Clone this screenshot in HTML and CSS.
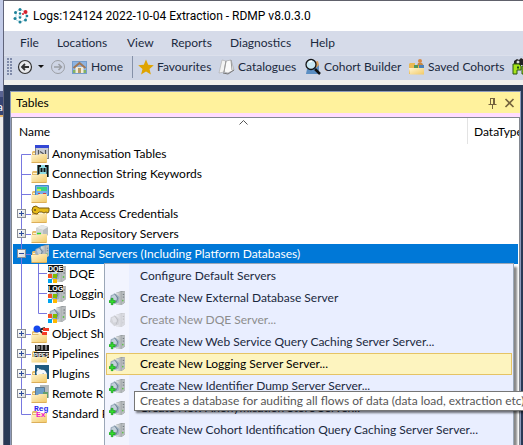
FILE: index.html
```html
<!DOCTYPE html>
<html lang="en">
<head>
<meta charset="utf-8">
<title>Logs:124124 2022-10-04 Extraction - RDMP v8.0.3.0</title>
<link rel="stylesheet" href="styles.css">
</head>
<body>
<svg class="defs" aria-hidden="true">
  <defs>
    <linearGradient id="gold" x1="0" y1="0" x2="1" y2="1"><stop offset="0" stop-color="#fff6d4"/><stop offset="1" stop-color="#f2c965"/></linearGradient>
    <linearGradient id="steel" x1="0" y1="0" x2="1" y2="0"><stop offset="0" stop-color="#e4e6e6"/><stop offset="1" stop-color="#a9aeb0"/></linearGradient>
    <linearGradient id="boxfill" x1="0" y1="0" x2="1" y2="1"><stop offset="0" stop-color="#fff"/><stop offset="1" stop-color="#d8d8d8"/></linearGradient>
  </defs>
  <symbol id="folder-back" viewBox="0 0 18 18"><path d="M1 17V7l1-1h4l1 2h9v9z" fill="#e6bd6c"/><path d="M2 8.500h13" stroke="#fff5d0"/></symbol>
  <symbol id="folder-front" viewBox="0 0 18 18"><path d="M0 10h7l1-1h8v8.500H.5z" fill="url(#gold)"/><path d="M.5 17.500h15" stroke="#dcae58"/></symbol>
  <symbol id="globe-server" viewBox="0 0 18 18"><path d="M8 3l6-2h4v13l-4 3H8z" fill="#8f9598"/><path d="M8 3l6-1v15H8z" fill="url(#steel)"/><path d="M14 2l4-1v13l-4 3z" fill="#b9bdbf"/><path d="M15.500 5h1.500M15.500 8h1.500" stroke="#687078"/><path d="M2 6l5-2 5 4-1 6-5 2-5-5z" fill="#9fb0c0"/><path d="M3 7l4-2 2 6-4 1z" fill="#c3d0da"/><path d="M6 4l4 5-2 5" fill="none" stroke="#6b7f92"/><circle cx="15.500" cy="12" r=".9" fill="#5cc244"/></symbol>
  <symbol id="add-server" viewBox="0 0 18 18"><use href="#globe-server"/><path d="M2.500 9.500h2v2.500H7v2H4.500v2.500h-2V14H0v-2h2.500z" fill="#36e22d" stroke="#129a1a" stroke-width=".8"/></symbol>
  <symbol id="windows" viewBox="0 0 18 18"><path d="M0 9h4v4H0z" fill="#f25022"/><path d="M5 9h4v4H5z" fill="#7fba00"/><path d="M0 14h4v4H0z" fill="#00a4ef"/><path d="M5 14h4v4H5z" fill="#ffb900"/></symbol>
  <symbol id="line-first" viewBox="0 0 14 20"><path d="M4.500 20V10.500H14" fill="none" stroke="#7878e0"/></symbol>
  <symbol id="line-mid" viewBox="0 0 14 20"><path d="M4.500 0v20M4.500 10.500H14" fill="none" stroke="#7878e0"/></symbol>
  <symbol id="line-last" viewBox="0 0 14 20"><path d="M4.500 0v10.500H14" fill="none" stroke="#7878e0"/></symbol>
  <symbol id="line-pass" viewBox="0 0 14 20"><path d="M4.500 0v20" fill="none" stroke="#7878e0"/></symbol>
  <symbol id="line-minus" viewBox="0 0 14 20"><use href="#line-mid"/><rect x=".5" y="5.500" width="8" height="8" fill="url(#boxfill)" stroke="#8b8f96"/><path d="M2 9.500h5" stroke="#2b4a9b"/></symbol>
  <symbol id="line-plus" viewBox="0 0 14 20"><use href="#line-minus"/><path d="M4.500 7v5" stroke="#2b4a9b"/></symbol>
  <symbol id="child-mid" viewBox="0 0 17 20"><path d="M7.500 0v20M7.500 9.500H16" fill="none" stroke="#7878e0"/></symbol>
  <symbol id="child-last" viewBox="0 0 17 20"><path d="M7.500 0v9.500H16" fill="none" stroke="#7878e0"/></symbol>
</svg>

<div class="behind" aria-hidden="true"><span class="behind-tab">a</span></div>

<div class="window">
  <header class="titlebar">
    <svg class="icon16" viewBox="0 0 16 16"><path d="M3 4l4-3 5 3M3 5v7l5 2 5-3V5M5 8h4" fill="none" stroke="#b7dce5"/><g fill="#1c8199"><circle cx="7" cy="1.500" r="1.500"/><circle cx="2.500" cy="4.500" r="1.500"/><circle cx="2" cy="10.500" r="1.500"/><circle cx="7" cy="14" r="1.500"/><circle cx="12.500" cy="12" r="1.500"/><circle cx="14" cy="8" r="1.300"/><circle cx="7" cy="5.500" r="1.200"/><circle cx="7" cy="9.500" r="1.300"/></g><circle cx="12.500" cy="4" r="2" fill="#d5202c"/><circle cx="10" cy="6" r="1" fill="#d5202c"/></svg>
    <h1>Logs:124124 2022-10-04 Extraction - RDMP v8.0.3.0</h1>
  </header>

  <nav class="menubar" aria-label="Main menu">
    <button>File</button><button>Locations</button><button>View</button><button>Reports</button><button>Diagnostics</button><button>Help</button>
  </nav>

  <div class="toolbar" role="toolbar" aria-label="Shortcuts">
    <span class="grip"></span>
    <button class="history" aria-label="Back"><svg class="icon16" viewBox="0 0 16 16"><circle cx="8" cy="8" r="6.500" fill="#e8e9ec" stroke="#333" stroke-width="1.200"/><path d="M12 8H5M8 5L5 8l3 3" fill="none" stroke="#333" stroke-width="1.800"/></svg><svg class="caret" viewBox="0 0 6 4"><path d="M0 0h6L3 3z" fill="#111"/></svg></button>
    <button class="forward" aria-label="Forward" disabled><svg class="icon16" viewBox="0 0 16 16"><circle cx="8" cy="8" r="6.500" fill="none" stroke="#9b9ea4"/><path d="M4 8h7M8.500 5l3 3-3 3" fill="none" stroke="#9b9ea4" stroke-width="1.500"/></svg></button>
    <button class="home"><svg class="icon16" viewBox="0 0 16 16"><rect x=".5" y="2.500" width="14" height="12" fill="#8db3e1" stroke="#759dcd"/><path d="M1 14h13v-3H1z" fill="#82b264"/><path d="M3.500 8h8v6h-8z" fill="#f3ebd8"/><path d="M1.500 9L7.500 4l6 5" fill="none" stroke="#a07655" stroke-width="2"/><path d="M6 9h3v5H6z" fill="#b99a64"/></svg>Home</button>
    <button class="favourites"><svg class="icon16" viewBox="0 0 16 16"><path d="M8 0.500l2.200 5.200 5.600.5-4.300 3.700 1.400 5.600L8 12.500 3.100 15.500l1.400-5.600L.2 6.200l5.600-.5z" fill="#dfa400"/></svg>Favourites</button>
    <button class="catalogues"><svg class="icon16" viewBox="0 0 16 16"><path d="M3 1l4 1-2 11-5 1z" fill="#f2f2f2" stroke="#aaa" stroke-width=".6"/><path d="M7 2l5-1 3 10-6 3-4-1z" fill="#fafafa" stroke="#999" stroke-width=".6"/><path d="M7 2L5 13M12 1l1 10" stroke="#999"/><path d="M4 14l5 1 6-4" fill="none" stroke="#777"/></svg>Catalogues</button>
    <button class="builder"><svg class="icon16" viewBox="0 0 16 16"><path d="M1 15l1-5 9-6 3 2v9z" fill="#5b8ec2"/><path d="M9 3l4-1 1 4-3 3z" fill="#d7a05f"/><circle cx="6" cy="5.500" r="5" fill="#c9e8f3" stroke="#151515" stroke-width="1.300"/><path d="M4 3l3-1" stroke="#fff" stroke-width="1.500"/><path d="M10 10l5 5" stroke="#111" stroke-width="2.500"/></svg>Cohort Builder</button>
    <button class="saved"><svg class="icon16" viewBox="0 0 16 16"><path d="M0 15V5l1-1h5v2h9v9z" fill="#e9b955"/><circle cx="11" cy="2" r="2" fill="#d98843"/><path d="M8 7l1-3h4l2 3z" fill="#c98942"/><path d="M5 9V6h4v3" fill="#51965a"/><path d="M10 9V6h5v3" fill="#4c82ba"/><path d="M0 9h15v6.500H1z" fill="url(#gold)"/></svg>Saved Cohorts</button>
    <button class="plugin" aria-label="Pipelines"><svg class="icon16" viewBox="0 0 16 16"><path d="M2 2l3-2 2 1 2-2 3 2 3-1v6H2z" fill="#222"/><circle cx="6" cy="3" r="1.500" fill="#ddd"/><path d="M1 15V5h6l2 2v4H5v4zM10 15V7h6v8z" fill="#a6e519" stroke="#2c5811"/><path d="M5 7.500h2v2H5z" fill="#164d17"/></svg></button>
  </div>

  <main class="workspace">
    <section class="panel">
      <header class="panel-head">
        <h2>Tables</h2>
        <button aria-label="Auto hide"><svg viewBox="0 0 9 12"><path d="M2.500 1v6M2 1.500h5M.500 7.500h8M4.500 8v4" fill="none" stroke="#75633d"/><path d="M6 1v6" stroke="#75633d" stroke-width="2"/></svg></button>
        <button aria-label="Close"><svg viewBox="0 0 9 12"><path d="M.5 2l8 8M8.500 2l-8 8" stroke="#75633d" stroke-width="1.600"/></svg></button>
      </header>
      <div class="list">
        <div class="columns">
          <button class="col-name">Name</button>
          <svg class="sort" viewBox="0 0 9 5"><path d="M.5 4.500l4-4 4 4" fill="none" stroke="#555"/></svg>
          <button class="col-type">DataType</button>
        </div>
        <ul class="tree" role="tree">
          <li role="treeitem"><svg class="line"><use href="#line-first"/></svg><svg class="icon18" viewBox="0 0 18 18"><use href="#folder-back"/><path d="M4 0h14v14H4z" fill="#808287"/><path d="M4 0h14v3H4z" fill="#3347d5"/><path d="M5 3h12v10H5z" fill="#c9ccd4"/><path d="M7.500 5v5M14.500 5v5M9 6.500l3 2-3 2" fill="none" stroke="#555" stroke-width="1.200"/><use href="#folder-front"/></svg>Anonymisation Tables</li>
          <li role="treeitem"><svg class="line"><use href="#line-mid"/></svg><svg class="icon18" viewBox="0 0 18 18"><use href="#folder-back"/><path d="M6 0h12v12H6z" fill="#8fdce2"/><path d="M10 1H7.500v9H10M14 1h2.500v10H14M10.500 3v4M13.500 3v4" fill="none" stroke="#111" stroke-width="2"/><use href="#folder-front"/></svg>Connection String Keywords</li>
          <li role="treeitem"><svg class="line"><use href="#line-mid"/></svg><svg class="icon18" viewBox="0 0 18 18"><use href="#folder-back"/><path d="M4.500 .5h13v10h-13z" fill="#74aee9" stroke="#4287c7"/><path d="M6 2h10v4H6z" fill="#39d383"/><path d="M6 4h4v2H6z" fill="#c7e953"/><path d="M7 8.500h2M12 8.500h3" stroke="#d74343"/><use href="#folder-front"/></svg>Dashboards</li>
          <li role="treeitem"><svg class="line"><use href="#line-plus"/></svg><svg class="icon18" viewBox="0 0 18 18"><use href="#folder-back"/><use href="#folder-front"/><path d="M2 2l3-1 3 2h10v3l-1 2-2-1-2 1-2-1H8L6 9 2 8 1 5z" fill="#e7bb18" stroke="#795b12"/><circle cx="4" cy="5" r="1" fill="#6c5318"/></svg>Data Access Credentials</li>
          <li role="treeitem"><svg class="line"><use href="#line-plus"/></svg><svg class="icon18" viewBox="0 0 18 18"><use href="#folder-back"/><path d="M5 3l6-3 6 2v8l-5 4-7-3z" fill="#b9bebf"/><path d="M5 3l6-3 6 2-5 3z" fill="#e5e8e8"/><path d="M5 3l7 2v8l-7-3z" fill="#d3d6d6"/><use href="#folder-front"/><path d="M6 8.500h4" stroke="#32d52a" stroke-width="1.500"/></svg>Data Repository Servers</li>
          <li role="treeitem" class="selected"><svg class="line"><use href="#line-minus"/></svg><svg class="icon18" viewBox="0 0 18 18"><use href="#folder-back"/><use href="#globe-server" x="3" y="-1" width="15" height="15"/><use href="#folder-front"/></svg>External Servers (Including Platform Databases)</li>
          <li role="treeitem"><svg class="line"><use href="#line-pass"/></svg><svg class="branch"><use href="#child-mid"/></svg><svg class="icon18" viewBox="0 0 18 18"><use href="#globe-server"/><path d="M0 0h15v7H0z" fill="#111"/><text x="0" y="6" class="badge-text">DQE</text><use href="#windows"/></svg>DQE</li>
          <li role="treeitem"><svg class="line"><use href="#line-pass"/></svg><svg class="branch"><use href="#child-mid"/></svg><svg class="icon18" viewBox="0 0 18 18"><use href="#globe-server"/><path d="M0 0h15v7H0z" fill="#111"/><text x="0" y="6" class="badge-text">LOG</text><use href="#windows"/></svg>Logging</li>
          <li role="treeitem"><svg class="line"><use href="#line-pass"/></svg><svg class="branch"><use href="#child-last"/></svg><svg class="icon18" viewBox="0 0 18 18"><use href="#globe-server"/><use href="#windows"/></svg>UIDs</li>
          <li role="treeitem"><svg class="line"><use href="#line-plus"/></svg><svg class="icon18" viewBox="0 0 18 18"><use href="#folder-back"/><use href="#folder-front"/><path d="M8 5l6-2M8 5l5 4" stroke="#222" stroke-width="2"/><circle cx="6" cy="4" r="3.500" fill="#1648ed"/><path d="M12 3h6v3h-6zM11 7h5v3h-5z" fill="#f43a24"/></svg>Object Sharing</li>
          <li role="treeitem"><svg class="line"><use href="#line-plus"/></svg><svg class="icon18" viewBox="0 0 18 18"><use href="#folder-back"/><path d="M4 0h14v6H4z" fill="#171717"/><path d="M6 0v5M11 0v5M15 0v5M8 1v3" stroke="#ddd"/><path d="M3 7h15v6H3z" fill="#222"/><text x="3" y="12" class="pipes-text">PIPES</text><path d="M0 12h16v5.500H.5z" fill="url(#gold)"/></svg>Pipelines</li>
          <li role="treeitem"><svg class="line"><use href="#line-plus"/></svg><svg class="icon18" viewBox="0 0 18 18"><use href="#folder-back"/><path d="M4 0h14v14H4z" fill="#205a80"/><path d="M6 10c-2-4 2-7 5-5 3-1 4 2 5 4l-1 3-3-4-2 5z" fill="#f6f8f9"/><circle cx="7" cy="4" r="1" fill="#f6f8f9"/><use href="#folder-front"/></svg>Plugins</li>
          <li role="treeitem"><svg class="line"><use href="#line-plus"/></svg><svg class="icon18" viewBox="0 0 18 18"><use href="#folder-back"/><path d="M9 0h9v13H9z" fill="#b3b9ba"/><path d="M4.500 2.500h9v8h-9z" fill="#6e9fc7" stroke="#5b7890"/><path d="M12 7h5v6h-5z" fill="#67a06c"/><use href="#folder-front"/></svg>Remote RDMP</li>
          <li role="treeitem"><svg class="line"><use href="#line-last"/></svg><svg class="icon18" viewBox="0 0 18 18"><use href="#folder-back"/><use href="#folder-front"/><text x="3" y="6" class="reg-text">Reg</text><text x="5" y="12" class="ex-text">Ex</text></svg>Standard Regex</li>
        </ul>
      </div>
    </section>
  </main>
</div>

<div class="context" role="menu">
  <button role="menuitem"><span class="slot"></span>Configure Default Servers</button>
  <button role="menuitem"><svg class="icon16 slot" viewBox="0 0 18 18"><use href="#add-server"/></svg>Create New External Database Server</button>
  <button role="menuitem" disabled><svg class="icon16 slot" viewBox="0 0 18 18"><use href="#globe-server"/></svg>Create New DQE Server...</button>
  <button role="menuitem"><svg class="icon16 slot" viewBox="0 0 18 18"><use href="#add-server"/></svg>Create New Web Service Query Caching Server Server...</button>
  <button role="menuitem" class="hot"><svg class="icon16 slot" viewBox="0 0 18 18"><use href="#add-server"/></svg>Create New Logging Server Server...</button>
  <button role="menuitem"><svg class="icon16 slot" viewBox="0 0 18 18"><use href="#add-server"/></svg>Create New Identifier Dump Server Server...</button>
  <button role="menuitem"><svg class="icon16 slot" viewBox="0 0 18 18"><use href="#add-server"/></svg>Create New Anonymisation Store Server...</button>
  <button role="menuitem"><svg class="icon16 slot" viewBox="0 0 18 18"><use href="#add-server"/></svg>Create New Cohort Identification Query Caching Server Server...</button>
  <div class="tooltip" role="tooltip">Creates a database for auditing all flows of data (data load, extraction etc)</div>
</div>
</body>
</html>
```
FILE: styles.css
```css
* { box-sizing: border-box; }

body {
  position: relative;
  display: flex;
  height: 100vh;
  margin: 0;
  overflow: hidden;
  background: #fff;
  color: #000;
  font: 12px/20px "Lato", "Liberation Sans", sans-serif;
}

h1, h2 { margin: 0; font: inherit; white-space: nowrap; }

button {
  display: flex;
  align-items: center;
  margin: 0;
  padding: 0;
  border: 0;
  background: none;
  color: inherit;
  font: inherit;
  white-space: nowrap;
}

svg { display: block; flex: none; overflow: visible; }
.defs { position: absolute; width: 0; height: 0; }
.icon16 { width: 16px; height: 16px; }
.icon18 { width: 18px; height: 18px; }

/* Edge of the window underneath */
.behind {
  flex: none;
  width: 3px;
  padding-top: 91px;
  overflow: hidden;
  background: linear-gradient(#c3cce8 0 91px, #596392 91px 97px, #364473 97px 115px, #e8b469 115px 117px, #ececec 117px);
}
.behind-tab { display: flex; justify-content: flex-end; padding-top: 6px; color: #fff; }

.window {
  display: flex;
  flex: 1;
  flex-direction: column;
  min-width: 0;
  border-top: 1px solid #60616b;
  border-left: 1px solid #60647a;
}

.titlebar {
  display: flex;
  flex: none;
  align-items: center;
  gap: 4px;
  height: 30px;
  padding-left: 9px;
  background: #fff;
  font-family: "Roboto", "Liberation Sans", sans-serif;
}

.menubar {
  display: grid;
  flex: none;
  grid-template-columns: 37px 70px 44px 59px 80px auto;
  height: 24px;
  padding-left: 16px;
  background: #d6dbe9;
  color: #1b293e;
}

.toolbar {
  display: flex;
  flex: none;
  align-items: center;
  height: 30px;
  padding: 0 0 2px 3px;
  overflow: hidden;
  border-top: 1px solid #dce0ec;
  border-bottom: 5px solid #f0f0ee;
  background: #ced5e5;
  color: #1b293e;
}
.toolbar button { flex: none; gap: 3px; height: 22px; }
.grip {
  flex: none;
  width: 6px;
  height: 18px;
  margin-right: 4px;
  background: radial-gradient(circle at 1px 1px, #808baa 1px, transparent 1px) 0 0 / 3px 3px;
}
.toolbar .history { gap: 5px; width: 33px; }
.caret { width: 6px; height: 4px; }
.forward { width: 22px; }
.home { width: 61px; border-right: 1px solid #8591a8; }
.favourites { width: 86px; padding-left: 5px; }
.catalogues { width: 86px; }
.builder { width: 104px; }
.saved { width: 103px; }

.workspace {
  display: flex;
  flex: 1;
  min-height: 0;
  padding: 6px 2px 0 6px;
  background: #293955;
}

.panel {
  display: flex;
  flex: 1;
  flex-direction: column;
  min-width: 0;
  border: 1px solid #8e9bbc;
  border-bottom: 0;
  background: #ffdcff;
}
.panel-head {
  display: flex;
  flex: none;
  align-items: center;
  gap: 8px;
  height: 21px;
  padding: 0 6px 0 5px;
  background: #fff29d;
}
.panel-head h2 { flex: 1; }
.panel-head svg { width: 9px; height: 12px; }

.list {
  flex: 1;
  margin-top: 4px;
  overflow: hidden;
  border: solid #828790;
  border-width: 1px 1px 0;
  background: #fff;
}
.columns {
  display: grid;
  grid-template-columns: 1fr auto 1fr 52px;
  height: 26px;
  padding-left: 7px;
}
.col-name { padding-top: 2px; }
.sort { grid-column: 2; width: 9px; height: 5px; margin-top: 2px; }
.col-type { grid-column: 4; padding: 2px 0 0 6px; overflow: hidden; border-left: 1px solid #e3e3e3; }

.tree { margin: 0 1px; padding: 0; list-style: none; }
.tree li {
  display: flex;
  align-items: center;
  height: 20px;
  padding-left: 4px;
  white-space: nowrap;
}
.tree .icon18 { margin-right: 3px; }
.line { width: 14px; height: 20px; }
.branch { width: 17px; height: 20px; }
.tree .selected { background: #0078d7; color: #fff; }

.badge-text { fill: #fff; font: bold 7px "Liberation Sans", sans-serif; }
.pipes-text { fill: #fff; font: bold 5px "Liberation Sans", sans-serif; }
.reg-text { fill: #2a2aee; font: bold 8px "Liberation Mono", monospace; }
.ex-text { fill: #f018d0; font: bold 8px "Liberation Mono", monospace; }

/* Context menu floating over the tree */
.context {
  position: absolute;
  top: 263px;
  left: 104px;
  right: 9px;
  padding: 1px 1px 20px;
  border: 1px solid #9ba7b7;
  background: linear-gradient(90deg, #f2f4fe 24px, #e9eeff 24px);
  box-shadow: 3px 4px 2px #0007;
  color: #1b293e;
}
.context button {
  width: 100%;
  height: 22px;
  padding-left: 2px;
  border: 1px solid transparent;
}
.context .slot { flex: none; width: 16px; margin-right: 15px; }
.context button:disabled { color: #8d8d8d; }
.context button:disabled svg { opacity: .45; filter: grayscale(1); }
.context .hot { border-color: #e5c365; background: #fdf4bf; color: #000; }

.tooltip {
  position: absolute;
  top: 127px;
  left: 29px;
  padding: 0 5px;
  border: 1px solid #767676;
  background: #fff;
  box-shadow: 2px 2px 2px #0008;
  color: #575757;
  line-height: 18px;
  white-space: nowrap;
}
```
